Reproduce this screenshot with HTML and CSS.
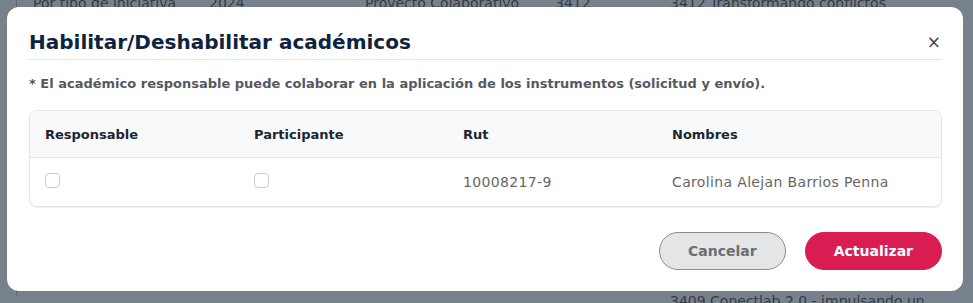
FILE: index.html
```html
<!DOCTYPE html>
<html lang="es">
  <head>
    <meta charset="UTF-8" />
    <meta name="viewport" content="width=device-width, initial-scale=1.0" />
    <title>Habilitar académicos</title>
    <link rel="stylesheet" href="styles.css">
  </head>

  <body>
    <div id="page">
      <div class="bg-row bg-row-top">
        <span>Por tipo de iniciativa</span>
        <span>2024</span>
        <span>Proyecto Colaborativo</span>
        <span>3412</span>
        <span>3412 Transformando conflictos</span>
      </div>
      <div class="bg-spacer"></div>
      <div class="bg-row bg-row-bottom">
        <span></span>
        <span></span>
        <span></span>
        <span></span>
        <span>3409 Conectlab 2.0 - impulsando un</span>
      </div>
    </div>

    <div id="backdrop">
      <div id="modal">
        <div id="modal-header">
          <h2 id="modal-title">Habilitar/Deshabilitar académicos</h2>
          <button class="btn-close" type="button">&times;</button>
        </div>
        <p id="modal-note">
          * El académico responsable puede colaborar en la aplicación de los instrumentos (solicitud y envío).
        </p>
        <div id="table-card">
          <table>
            <thead>
              <tr>
                <th class="col-check">Responsable</th>
                <th class="col-check">Participante</th>
                <th class="col-check">Rut</th>
                <th>Nombres</th>
              </tr>
            </thead>
            <tbody>
              <tr>
                <td><input type="checkbox" class="check" /></td>
                <td><input type="checkbox" class="check" /></td>
                <td>10008217-9</td>
                <td>Carolina Alejan Barrios Penna</td>
              </tr>
            </tbody>
          </table>
        </div>
        <div id="modal-footer">
          <button class="btn btn-cancel" type="button">Cancelar</button>
          <button class="btn btn-update" type="button">Actualizar</button>
        </div>
      </div>
    </div>
  </body>
</html>
```

FILE: styles.css
```css
body {
  margin: 0;
  height: 303px;
  overflow: hidden;
  background-color: #77818b;
  font-family: "DejaVu Sans", Verdana, sans-serif;
}

#page {
  margin-left: 16px;
  border-left: 1px solid #5f6871;
  height: 100%;
}

.bg-row {
  display: grid;
  grid-template-columns: 176px 156px 190px 115px 1fr;
  padding-left: 16px;
  font-size: 14px;
  line-height: 20px;
  color: #343b43;
  white-space: nowrap;
}

.bg-row-top {
  margin-top: -7px;
}

.bg-spacer {
  height: 278px;
}

#backdrop {
  position: fixed;
  inset: 0;
  padding: 7px 10px 0 7px;
}

#modal {
  background-color: #fff;
  border-radius: 12px;
  height: 284px;
  padding: 0 21px 0 22px;
  box-sizing: border-box;
}

#modal-header {
  display: flex;
  align-items: center;
  justify-content: space-between;
  padding: 23px 0 5px;
  border-bottom: 1px solid #e3e5e8;
}

#modal-title {
  margin: 0;
  font-size: 20px;
  line-height: 24px;
  font-weight: bold;
  color: #0d2340;
}

.btn-close {
  border: 0;
  background: none;
  padding: 0 1px 0 0;
  font-family: "DejaVu Sans", sans-serif;
  font-size: 17px;
  line-height: 24px;
  color: #444;
}

#modal-note {
  margin: 14px 0 16px;
  font-size: 13px;
  line-height: 20px;
  font-weight: bold;
  color: #55595e;
}

#table-card {
  border: 1px solid #e3e5e8;
  border-radius: 8px;
  overflow: hidden;
  box-shadow: 0 1px 1px rgba(0, 0, 0, 0.08);
}

table {
  width: 100%;
  border-collapse: collapse;
  font-size: 14px;
}

th {
  text-align: left;
  font-size: 13px;
  font-weight: bold;
  color: #1b2633;
  background-color: #f8f9fa;
  height: 46px;
  padding: 0 15px;
  border-bottom: 1px solid #e3e5e8;
}

.col-check {
  width: 179px;
}

td {
  height: 48px;
  padding: 0 15px;
  color: #666;
  letter-spacing: 0.35px;
}

.check {
  appearance: none;
  margin: -3px 0 0;
  display: block;
  width: 15px;
  height: 15px;
  border: 1px solid #c8ccd0;
  border-radius: 4px;
  background: #fff;
}

#modal-footer {
  display: flex;
  justify-content: flex-end;
  gap: 19px;
  padding-top: 25px;
}

.btn {
  height: 38px;
  border-radius: 19px;
  font-family: "DejaVu Sans", Verdana, sans-serif;
  font-size: 14px;
  font-weight: bold;
  padding: 0 28px;
}

.btn-cancel {
  background-color: #e3e5e7;
  border: 1px solid #8a8e92;
  color: #6b6e72;
}

.btn-update {
  background-color: #d91c52;
  border: 1px solid #d91c52;
  color: #fff;
}
```
